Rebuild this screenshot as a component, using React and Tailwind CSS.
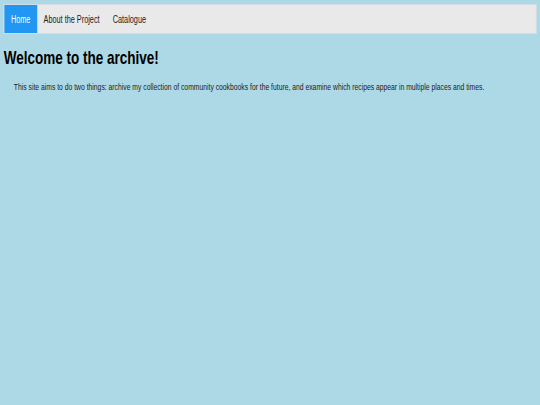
const links = ["Home", "About the Project", "Catalogue"];

// The page is laid out at 740px and squeezed horizontally, so the
// Arial-metric text comes out narrow like the original site's type.
export default function App() {
  return (
    <div className="h-[405px] w-[540px] overflow-hidden bg-[#add8e6]">
      <div
        className="w-[740px] origin-top-left scale-x-[0.73] px-[5px] pt-[4px] text-black"
        style={{ fontFamily: '"Liberation Sans", Arial, sans-serif' }}
      >
        <nav className="flex h-[30px] items-stretch border border-[#d3dde2] bg-[#e9e9e9]">
          {links.map((link, i) => (
            <a
              key={link}
              href="#"
              className={
                i === 0
                  ? "flex items-center bg-[#2196f3] px-[9px] text-[10px] text-white"
                  : "flex items-center px-[9px] text-[10px] text-[#222]"
              }
            >
              {link}
            </a>
          ))}
        </nav>
        <h1 className="mt-[13px] text-[18.5px] font-bold leading-[22px]">Welcome to the archive!</h1>
        <p className="mt-[12px] pl-[14px] text-[9.3px] leading-[12px] text-[#222]">
          This site aims to do two things: archive my collection of community cookbooks for the future, and examine which recipes appear in multiple places and times.
        </p>
      </div>
    </div>
  );
}
